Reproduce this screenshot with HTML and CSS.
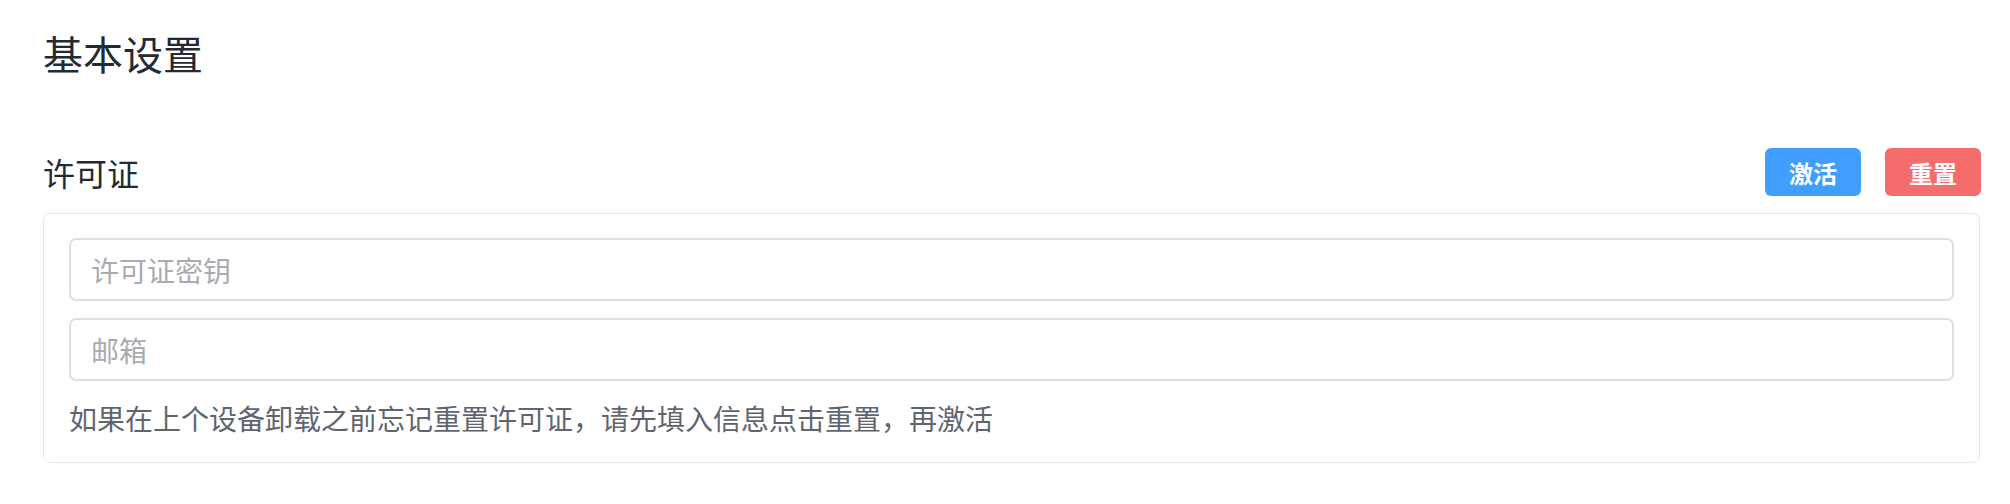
FILE: index.html
```html
<!DOCTYPE html>
<html lang="zh-CN">
<head>
<meta charset="utf-8">
<title>基本设置</title>
<link rel="stylesheet" href="styles.css">
</head>
<body>
<div class="page">
  <h1 class="title">基本设置</h1>
  <div class="section-head">
    <span class="section-label">许可证</span>
    <div class="actions">
      <button class="btn btn-primary">激活</button>
      <button class="btn btn-danger">重置</button>
    </div>
  </div>
  <div class="card">
    <input class="field" type="text" placeholder="许可证密钥">
    <input class="field" type="text" placeholder="邮箱">
    <p class="hint">如果在上个设备卸载之前忘记重置许可证，请先填入信息点击重置，再激活</p>
  </div>
</div>
</body>
</html>
```

FILE: styles.css
```css
* { box-sizing: border-box; }
html, body {
  margin: 0;
  padding: 0;
  background: #ffffff;
}
body {
  font-family: "Noto Sans CJK SC", "Noto Sans", sans-serif;
}
.page {
  padding: 30px 30px 0 43px;
}
.title {
  margin: 0;
  font-size: 40px;
  line-height: 47px;
  font-weight: 400;
  color: #232a34;
}
.section-head {
  margin-top: 71px;
  height: 48px;
  display: flex;
  align-items: center;
  justify-content: space-between;
}
.section-label {
  font-size: 32px;
  line-height: 48px;
  color: #232a34;
}
.actions {
  display: flex;
  gap: 24px;
  margin-right: -1px;
}
.btn {
  width: 96px;
  height: 48px;
  border: none;
  border-radius: 6px;
  color: #ffffff;
  font-family: "Noto Sans CJK SC", sans-serif;
  font-size: 24px;
  font-weight: 700;
  padding: 0;
  cursor: pointer;
}
.btn-primary { background: #409eff; }
.btn-danger { background: #f56c6c; }
.card {
  margin-top: 17px;
  border: 1.5px solid #e4e7ed;
  border-radius: 7px;
  padding: 24px 25px 23px 25px;
  display: flex;
  flex-direction: column;
  gap: 17px;
}
.field {
  height: 63px;
  width: 100%;
  border: 2px solid #dcdfe6;
  border-radius: 7px;
  padding: 0 20px;
  font-family: "Noto Sans CJK SC", sans-serif;
  font-size: 28px;
  color: #303133;
  outline: none;
}
.field::placeholder { color: #a8abb2; }
.hint {
  margin: -1px 0 0 0;
  font-size: 28px;
  line-height: 42px;
  color: #5f6570;
}
```
